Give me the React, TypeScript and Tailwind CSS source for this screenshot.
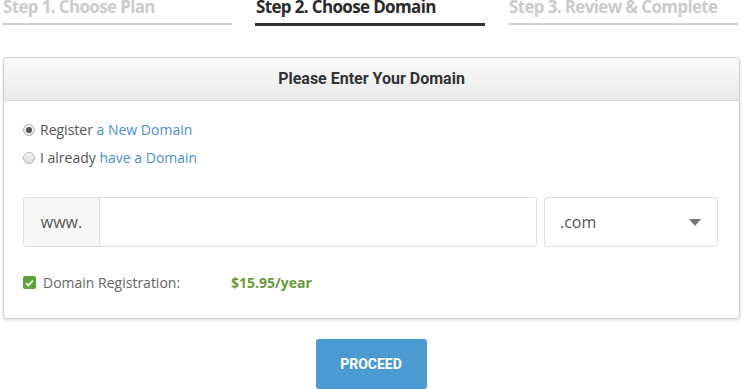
import { FC } from 'react'

const steps = [
  { label: 'Step 1. Choose Plan', active: false },
  { label: 'Step 2. Choose Domain', active: true },
  { label: 'Step 3. Review & Complete', active: false },
]

const App: FC = () => {
  return (
    <div className="w-[743px] h-[389px] overflow-hidden bg-white" style={{ fontFamily: '"Open Sans", sans-serif' }}>
      {/* Steps */}
      <div className="flex gap-[23px] px-[2px] -mt-[5px]">
        {steps.map((step) => (
          <div key={step.label} className="w-[230px]">
            <div
              className={`text-[17px] font-bold leading-[24px] tracking-[-0.65px] pl-[1px] ${
                step.active ? 'text-[#2b2b2b]' : 'text-[#cbcbcb]'
              }`}
            >
              {step.label}
            </div>
            <div className={step.active ? 'mt-[4px] h-[3px] bg-[#333333]' : 'mt-[4px] h-[2px] bg-[#d2d2d2]'} />
          </div>
        ))}
      </div>

      {/* Panel */}
      <div className="mx-[3px] mt-[31px] w-[737px] rounded-[4px] border border-[#cfcfcf] shadow-[0_1px_3px_rgba(0,0,0,0.15)]">
        <div className="h-[43px] flex items-center justify-center rounded-t-[4px] border-b border-[#d4d4d4] bg-gradient-to-b from-[#fbfbfb] to-[#e9e9e9]">
          <span className="text-[16px] font-bold text-[#333333]" style={{ fontFamily: 'Roboto, sans-serif' }}>
            Please Enter Your Domain
          </span>
        </div>

        <div className="px-[19px] pt-[19px] pb-[25px]">
          {/* Radios */}
          <div className="flex flex-col gap-[8px] text-[14px] leading-[20px] text-[#555555]">
            <label className="flex items-center gap-[5px]">
              <span className="w-[12px] h-[12px] rounded-full border border-[#b5b5b5] bg-gradient-to-b from-[#f4f4f4] to-[#dcdcdc] flex items-center justify-center">
                <span className="w-[6px] h-[6px] rounded-full bg-[#555555]" />
              </span>
              <span>
                Register <span className="text-[#4a8fd4]">a New Domain</span>
              </span>
            </label>
            <label className="flex items-center gap-[5px]">
              <span className="w-[12px] h-[12px] rounded-full border border-[#b5b5b5] bg-gradient-to-b from-[#f4f4f4] to-[#dcdcdc]" />
              <span>
                I already <span className="text-[#4a8fd4]">have a Domain</span>
              </span>
            </label>
          </div>

          {/* Domain input */}
          <div className="mt-[29px] flex gap-[7px]">
            <div className="flex w-[514px] h-[50px] rounded-[3px] border border-[#e0e0e0]">
              <div className="w-[76px] flex items-center justify-center bg-[#f7f7f7] border-r border-[#e0e0e0] text-[16px] text-[#555555]">
                www.
              </div>
              <div className="flex-1 bg-white rounded-r-[3px]" />
            </div>
            <div className="w-[174px] h-[50px] rounded-[3px] border border-[#e0e0e0] flex items-center justify-between pl-[15px] pr-[16px] text-[16px] text-[#555555]">
              <span>.com</span>
              <svg width="12" height="7" viewBox="0 0 12 7">
                <path d="M0 0h12L6 7z" fill="#777777" />
              </svg>
            </div>
          </div>

          {/* Registration */}
          <div className="mt-[25px] flex items-center text-[14px] text-[#666666]">
            <span className="w-[13px] h-[13px] rounded-[2px] bg-[#5ea23a] flex items-center justify-center">
              <svg width="9" height="8" viewBox="0 0 9 8">
                <path d="M1 4.2l2.3 2.2L8 1.5" fill="none" stroke="#ffffff" strokeWidth="1.8" />
              </svg>
            </span>
            <span className="ml-[7px] w-[188px]">Domain Registration:</span>
            <span className="font-bold text-[#6b9a3b]">$15.95/year</span>
          </div>
        </div>
      </div>

      {/* Button */}
      <div className="flex justify-center mt-[20px]">
        <button
          className="ml-[-1px] w-[111px] h-[50px] rounded-[3px] bg-[#4b9ad2] text-white text-[14px] font-bold"
          style={{ fontFamily: 'Roboto, sans-serif' }}
        >
          PROCEED
        </button>
      </div>
    </div>
  )
}

export default App
